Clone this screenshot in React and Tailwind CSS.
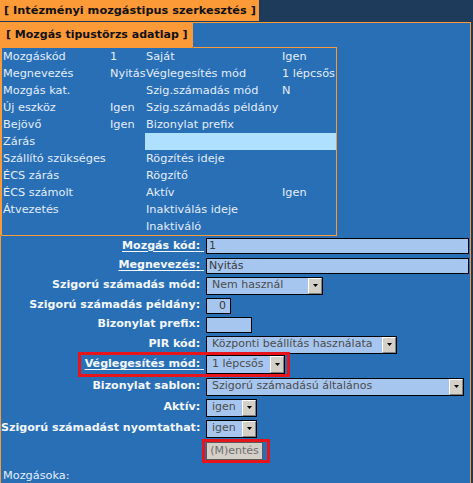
import React from "react";

// Verdana-like look, DejaVu Sans is the closest installed family
const FONT = "font-['DejaVu_Sans',Verdana,sans-serif]";

const DATA_ROWS = [
  ["Mozgáskód", "1", "Saját", "Igen"],
  ["Megnevezés", "Nyitás", "Véglegesítés mód", "1 lépcsős"],
  ["Mozgás kat.", "", "Szig.számadás mód", "N"],
  ["Új eszköz", "Igen", "Szig.számadás példány", ""],
  ["Bejövő", "Igen", "Bizonylat prefix", ""],
  ["Zárás", "", "", "", true],
  ["Szállító szükséges", "", "Rögzítés ideje", ""],
  ["ÉCS zárás", "", "Rögzítő", ""],
  ["ÉCS számolt", "", "Aktív", "Igen"],
  ["Átvezetés", "", "Inaktiválás ideje", ""],
  ["", "", "Inaktiváló", ""],
];

const Label = ({ children, link, w = "w-[203px]" }) => (
  <div className={`${w} shrink-0 text-right font-bold text-[11.1px] text-[#f4f7fd] whitespace-nowrap`}>
    {link ? (
      <span className="underline underline-offset-2">
        {children}:{"\u00a0"}
      </span>
    ) : (
      <span>
        {children}:{"\u00a0"}
      </span>
    )}
  </div>
);

const TextBox = ({ w, value, right }) => (
  <div
    className={`${w} h-[16px] border border-black bg-[#a6c6ef] text-[#3a3a3a] leading-[14px] whitespace-nowrap ${
      right ? "text-right pr-[4px]" : "pl-[2px]"
    }`}
  >
    {value}
  </div>
);

const SelectBox = ({ w, value, h = "h-[18px]" }) => (
  <div className={`${w} ${h} border border-black bg-[#a6c6ef] flex`}>
    <span className="flex-1 pl-[5px] self-center text-[#4c4c4c] whitespace-nowrap overflow-hidden">
      {value}
    </span>
    <span className="w-[14px] bg-[#d4d0c8] border-t border-l border-white border-b border-r border-b-[#808080] border-r-[#808080] flex items-center justify-center">
      <svg width="5" height="3" viewBox="0 0 5 3">
        <path d="M0 0h5L2.5 3z" fill="#000" />
      </svg>
    </span>
  </div>
);

const FormRow = ({ h, label, link, children }) => (
  <div className={`flex items-center ${h}`}>
    <Label link={link}>{label}</Label>
    <div className="ml-[2px]">{children}</div>
  </div>
);

export default function App() {
  return (
    <div className={`w-[473px] h-[483px] overflow-hidden bg-[#1e3b5b] text-[11px] ${FONT}`}>
      <div className="w-[259px] h-[21px] bg-[#fd9a38] pl-[4px] font-bold text-[11.3px] text-[#111] leading-[21px] whitespace-nowrap">
        [ Intézményi mozgástipus szerkesztés ]
      </div>

      <div className="mt-[1px] w-[471px] h-[470px] border border-[#fd9a38] bg-[#286fb6]">
        <div className="w-[192px] h-[24px] bg-[#fd9a38] pl-[5px] font-bold text-[#111] leading-[24px] whitespace-nowrap">
          [ Mozgás tipustörzs adatlap ]
        </div>

        {/* adatlap */}
        <div className="w-[336px] border border-[#fd9a38] grid grid-cols-[107px_36px_136px_1fr] text-[11.3px] text-[#e4edfa]">
          {DATA_ROWS.map((r, i) =>
            [0, 1, 2, 3].map((c) => (
              <div
                key={i + "-" + c}
                className={`h-[17px] leading-[17px] pl-[1px] whitespace-nowrap ${
                  r[4] && c > 1 ? "bg-[#b0e0ff]" : ""
                }`}
              >
                {r[c]}
              </div>
            ))
          )}
        </div>

        {/* form */}
        <div className="flex flex-col">
          <FormRow h="h-[20px]" label="Mozgás kód" link>
            <TextBox w="w-[263px]" value="1" />
          </FormRow>
          <FormRow h="h-[19px]" label="Megnevezés" link>
            <TextBox w="w-[263px]" value="Nyitás" />
          </FormRow>
          <FormRow h="h-[21px]" label="Szigorú számadás mód">
            <SelectBox w="w-[117px]" value="Nem használ" />
          </FormRow>
          <FormRow h="h-[19px]" label="Szigorú számadás példány">
            <TextBox w="w-[25px]" value="0" right />
          </FormRow>
          <FormRow h="h-[19px]" label="Bizonylat prefix">
            <TextBox w="w-[46px]" value="" />
          </FormRow>
          <FormRow h="h-[21px]" label="PIR kód">
            <SelectBox w="w-[191px]" value="Központi beállítás használata" />
          </FormRow>

          <div className="flex items-start h-[21px]">
            <div className="ml-[80px] h-[19px] flex items-center outline-[3px] outline-solid outline-[#e8141c]">
              <Label link w="w-[123px]">
                Véglegesítés mód
              </Label>
              <div className="ml-[2px] mr-[2px]">
                <SelectBox w="w-[79px]" h="h-[19px]" value="1 lépcsős" />
              </div>
            </div>
          </div>

          <FormRow h="h-[21px]" label="Bizonylat sablon">
            <SelectBox w="w-[258px]" value="Szigorú számadású általános" />
          </FormRow>
          <FormRow h="h-[21px]" label="Aktív">
            <SelectBox w="w-[51px]" value="igen" />
          </FormRow>
          <FormRow h="h-[21px]" label="Szigorú számadást nyomtathat">
            <SelectBox w="w-[51px]" value="igen" />
          </FormRow>

          <div className="h-[25px] flex items-start">
            <div className="ml-[201px] w-[68px] h-[24px] border-[3px] border-[#e8141c] flex">
              <button className="ml-[1px] w-[57px] h-[18px] bg-[#d4d0c8] border border-[#5a5a5a] text-[#6e6e6e] leading-[16px] text-center">
                (M)entés
              </button>
            </div>
          </div>

          <div className="h-[24px] leading-[24px] pl-[2px] text-[11.3px] text-[#e4edfa]">Mozgásoka:</div>
        </div>
      </div>
    </div>
  );
}
